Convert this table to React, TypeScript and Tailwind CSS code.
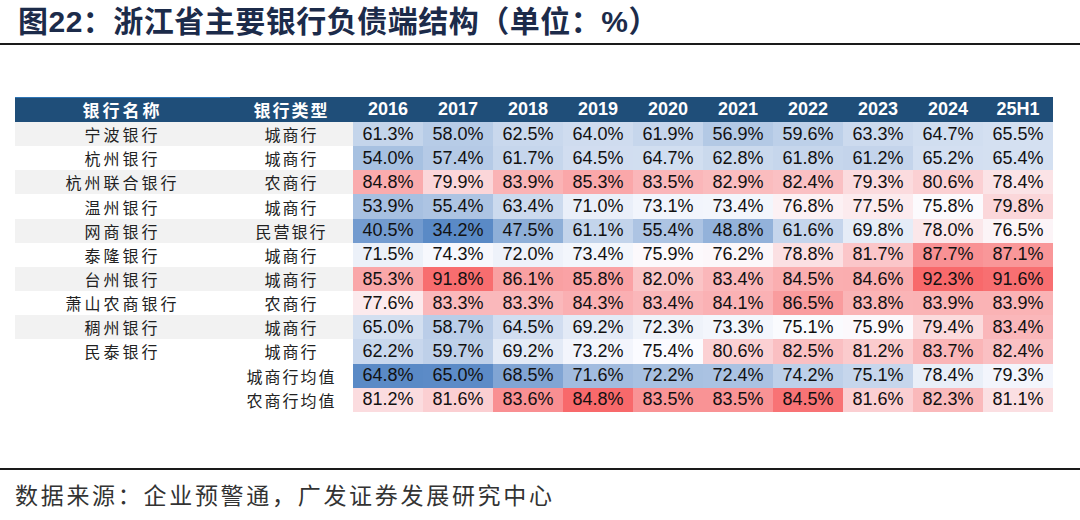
import React from "react";

type Row = { name: string; type: string; v: number[] };

const ROWS: Row[] = [
  { name: "宁波银行", type: "城商行", v: [61.3, 58.0, 62.5, 64.0, 61.9, 56.9, 59.6, 63.3, 64.7, 65.5] },
  { name: "杭州银行", type: "城商行", v: [54.0, 57.4, 61.7, 64.5, 64.7, 62.8, 61.8, 61.2, 65.2, 65.4] },
  { name: "杭州联合银行", type: "农商行", v: [84.8, 79.9, 83.9, 85.3, 83.5, 82.9, 82.4, 79.3, 80.6, 78.4] },
  { name: "温州银行", type: "城商行", v: [53.9, 55.4, 63.4, 71.0, 73.1, 73.4, 76.8, 77.5, 75.8, 79.8] },
  { name: "网商银行", type: "民营银行", v: [40.5, 34.2, 47.5, 61.1, 55.4, 48.8, 61.6, 69.8, 78.0, 76.5] },
  { name: "泰隆银行", type: "城商行", v: [71.5, 74.3, 72.0, 73.4, 75.9, 76.2, 78.8, 81.7, 87.7, 87.1] },
  { name: "台州银行", type: "城商行", v: [85.3, 91.8, 86.1, 85.8, 82.0, 83.4, 84.5, 84.6, 92.3, 91.6] },
  { name: "萧山农商银行", type: "农商行", v: [77.6, 83.3, 83.3, 84.3, 83.4, 84.1, 86.5, 83.8, 83.9, 83.9] },
  { name: "稠州银行", type: "城商行", v: [65.0, 58.7, 64.5, 69.2, 72.3, 73.3, 75.1, 75.9, 79.4, 83.4] },
  { name: "民泰银行", type: "城商行", v: [62.2, 59.7, 69.2, 73.2, 75.4, 80.6, 82.5, 81.2, 83.7, 82.4] },
];

const AVG: Row[] = [
  { name: "", type: "城商行均值", v: [64.8, 65.0, 68.5, 71.6, 72.2, 72.4, 74.2, 75.1, 78.4, 79.3] },
  { name: "", type: "农商行均值", v: [81.2, 81.6, 83.6, 84.8, 83.5, 83.5, 84.5, 81.6, 82.3, 81.1] },
];

const YEARS = ["2016", "2017", "2018", "2019", "2020", "2021", "2022", "2023", "2024", "25H1"];

function stats(rows: Row[]) {
  const all = rows.flatMap((r) => r.v).sort((a, b) => a - b);
  const n = all.length;
  const med = n % 2 ? all[(n - 1) / 2] : (all[n / 2 - 1] + all[n / 2]) / 2;
  return { min: all[0], max: all[n - 1], med };
}

const BLUE = [0x5a, 0x8a, 0xc6];
const WHITE = [0xfc, 0xfc, 0xff];
const RED = [0xf8, 0x69, 0x6b];

function mix(a: number[], b: number[], t: number) {
  const c = a.map((x, i) => Math.round(x + (b[i] - x) * t));
  return `rgb(${c[0]},${c[1]},${c[2]})`;
}

function colorFor(v: number, s: { min: number; max: number; med: number }) {
  if (v <= s.med) {
    const t = (s.med - v) / (s.med - s.min || 1);
    return mix(WHITE, BLUE, t);
  }
  const t = (v - s.med) / (s.max - s.med || 1);
  return mix(WHITE, RED, t);
}

const CJK = "font-['Noto_Sans_CJK_SC',sans-serif]";

function DataRow({ row, idx, s }: { row: Row; idx: number; s: ReturnType<typeof stats> }) {
  const band = idx >= 0 && idx % 2 === 0 ? "bg-[#f2f2f2]" : "bg-white";
  return (
    <div className="flex h-[24.17px]">
      <div className={`w-[215px] flex items-center justify-center ${band} ${CJK} text-[16px] tracking-[3px] text-[#222]`}>
        {row.name}
      </div>
      <div className={`w-[123px] flex items-center justify-center ${band} ${CJK} text-[16px] tracking-[2px] text-[#222]`}>
        {row.type}
      </div>
      {row.v.map((v, i) => (
        <div
          key={i}
          className="w-[70px] flex items-center justify-center font-['Liberation_Sans',Arial,sans-serif] text-[18px] text-[#111]"
          style={{ backgroundColor: colorFor(v, s) }}
        >
          {v.toFixed(1)}%
        </div>
      ))}
    </div>
  );
}

export default function App() {
  const sMain = stats(ROWS);
  const sAvg = stats(AVG);
  return (
    <div className="w-[1080px] h-[520px] bg-white flex flex-col overflow-hidden">
      <div className="h-[43px] flex items-center pl-[18px] text-[30px] font-bold text-[#1c2b4a] tracking-[0.5px] font-['Liberation_Sans','Noto_Sans_CJK_SC',sans-serif]">
        图22：浙江省主要银行负债端结构（单位：%）
      </div>
      <div className="h-[2px] bg-[#1a1a1a]" />
      <div className="mt-[52px] pl-[15px] flex flex-col">
        <div className="flex h-[25px] bg-[#1f4e79] text-white w-fit">
          <div className={`w-[215px] flex items-center justify-center border-t border-[#2f75b5] ${CJK} text-[17px] font-bold tracking-[3px]`}>
            银行名称
          </div>
          <div className={`w-[123px] flex items-center justify-center ${CJK} text-[17px] font-bold tracking-[2px]`}>
            银行类型
          </div>
          {YEARS.map((y) => (
            <div
              key={y}
              className="w-[70px] flex items-center justify-center font-['Liberation_Sans',Arial,sans-serif] text-[18px] font-bold"
            >
              {y}
            </div>
          ))}
        </div>
        {ROWS.map((r, i) => (
          <DataRow key={r.name} row={r} idx={i} s={sMain} />
        ))}
        {AVG.map((r) => (
          <DataRow key={r.type} row={r} idx={-1} s={sAvg} />
        ))}
      </div>
      <div className="mt-[56px] h-[2px] bg-[#1a1a1a]" />
      <div className={`h-[48px] flex items-center pl-[15px] ${CJK} text-[23px] tracking-[2.7px] text-[#333]`}>
        数据来源：企业预警通，广发证券发展研究中心
      </div>
    </div>
  );
}
